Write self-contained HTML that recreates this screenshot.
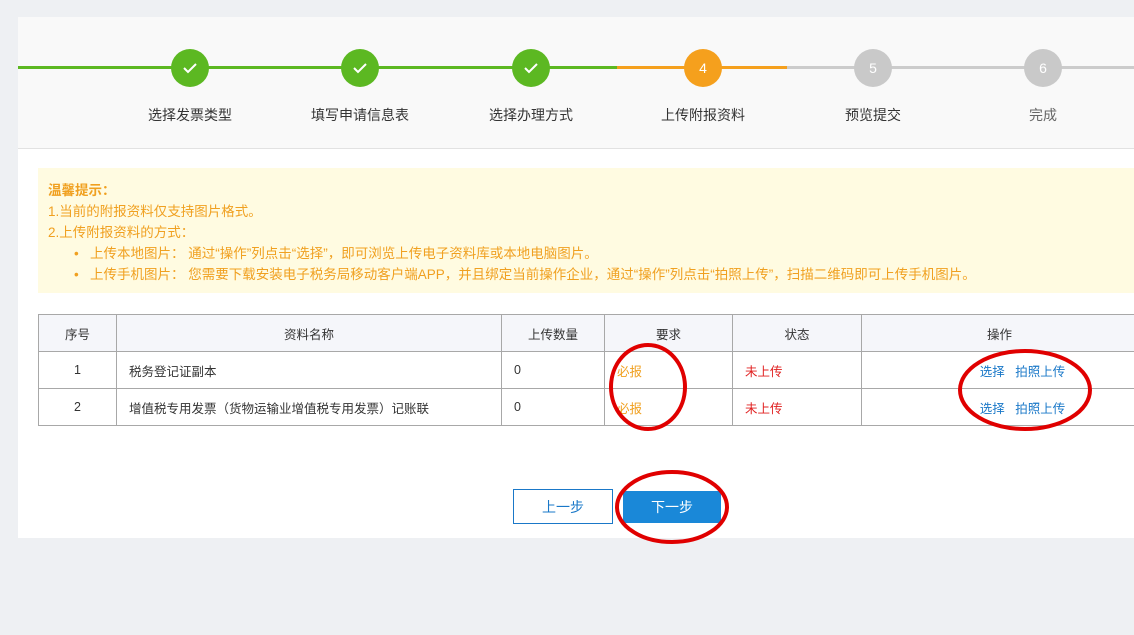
<!DOCTYPE html>
<html><head><meta charset="utf-8"><style>
*{margin:0;padding:0;box-sizing:border-box}
body{width:1134px;height:635px;background:#eef0f3;position:relative;overflow:hidden;font-family:"Liberation Sans","Noto Sans CJK SC","Microsoft YaHei",sans-serif;font-size:13px;color:#333}
.panel{position:absolute;left:18px;top:17px;width:1116px;height:521px;background:#fff}
.steps{position:absolute;left:0;top:0;width:1116px;height:132px;background:#f9f9f9;border-bottom:1px solid #e2e2e2}
.ln{position:absolute;top:49px;height:3px}
.c{position:absolute;top:32px;width:38px;height:38px;border-radius:50%;color:#fff;text-align:center;line-height:38px;font-size:14px}
.lb{position:absolute;top:88px;width:140px;text-align:center;font-size:14px;color:#333}
.notice{position:absolute;left:20px;top:151px;width:1096px;height:125px;background:#fffbe1;color:#f0a020;font-size:13.5px;padding:12px 0 0 10px;line-height:21px}
.notice b{font-weight:bold}
.notice .li{padding-left:26px;position:relative}
.notice .li:before{content:"•";position:absolute;left:26px;top:0}
.notice .li span{padding-left:16px}
table{position:absolute;left:20px;top:297px;border-collapse:collapse;width:1100px;font-size:12.5px}
td,th{border:1px solid #a8a8a8;height:37px;font-weight:normal}
th{background:#f5f6fa;text-align:center;color:#333}
td{padding-left:12px}
.o{color:#f0a020}.r{color:#e02020}.bl{color:#1a78c8}
.btn{position:absolute;height:35px;text-align:center;line-height:35px;font-size:14px}
</style></head><body>
<div class="panel">
<div class="steps">
<div class="ln" style="left:0;width:599px;background:#5cb822"></div>
<div class="ln" style="left:599px;width:170px;background:#f5a01d"></div>
<div class="ln" style="left:769px;width:347px;background:#ccc"></div>
<div class="c" style="left:153px;background:#5cb822"><svg width="16" height="12" viewBox="0 0 16 12" style="margin-top:13px"><path d="M2 6l4 4 8-8" stroke="#fff" stroke-width="2" fill="none"/></svg></div>
<div class="c" style="left:323px;background:#5cb822"><svg width="16" height="12" viewBox="0 0 16 12" style="margin-top:13px"><path d="M2 6l4 4 8-8" stroke="#fff" stroke-width="2" fill="none"/></svg></div>
<div class="c" style="left:494px;background:#5cb822"><svg width="16" height="12" viewBox="0 0 16 12" style="margin-top:13px"><path d="M2 6l4 4 8-8" stroke="#fff" stroke-width="2" fill="none"/></svg></div>
<div class="c" style="left:666px;background:#f5a01d">4</div>
<div class="c" style="left:836px;background:#c9c9c9">5</div>
<div class="c" style="left:1006px;background:#c9c9c9">6</div>
<div class="lb" style="left:102px">选择发票类型</div>
<div class="lb" style="left:272px">填写申请信息表</div>
<div class="lb" style="left:443px">选择办理方式</div>
<div class="lb" style="left:615px">上传附报资料</div>
<div class="lb" style="left:785px">预览提交</div>
<div class="lb" style="left:955px;color:#666">完成</div>
</div>
<div class="notice">
<div><b>温馨提示：</b></div>
<div>1.当前的附报资料仅支持图片格式。</div>
<div>2.上传附报资料的方式：</div>
<div class="li"><span>上传本地图片： 通过“操作”列点击“选择”，即可浏览上传电子资料库或本地电脑图片。</span></div>
<div class="li"><span>上传手机图片： 您需要下载安装电子税务局移动客户端APP，并且绑定当前操作企业，通过“操作”列点击“拍照上传”，扫描二维码即可上传手机图片。</span></div>
</div>
<table>
<tr><th style="width:78px">序号</th><th style="width:385px">资料名称</th><th style="width:103px">上传数量</th><th style="width:128px">要求</th><th style="width:129px">状态</th><th>操作</th></tr>
<tr><td style="text-align:center;padding:0">1</td><td>税务登记证副本</td><td>0</td><td class="o">必报</td><td class="r">未上传</td><td style="text-align:center;padding:0 0 0 46px" class="bl">选择&nbsp;&nbsp;&nbsp;拍照上传</td></tr>
<tr><td style="text-align:center;padding:0">2</td><td>增值税专用发票（货物运输业增值税专用发票）记账联</td><td>0</td><td class="o">必报</td><td class="r">未上传</td><td style="text-align:center;padding:0 0 0 46px" class="bl">选择&nbsp;&nbsp;&nbsp;拍照上传</td></tr>
</table>
<div class="btn" style="left:495px;top:472px;width:100px;border:1px solid #1a78c8;color:#1a78c8;background:#fff">上一步</div>
<div class="btn" style="left:605px;top:474px;width:98px;height:32px;line-height:32px;background:#1a88d8;color:#fff">下一步</div>
</div>
<svg width="1134" height="635" style="position:absolute;left:0;top:0" fill="none" stroke="#e00000" stroke-width="4">
<ellipse cx="648" cy="387" rx="37" ry="42"/>
<ellipse cx="1025" cy="390" rx="65" ry="39"/>
<ellipse cx="672" cy="507" rx="55" ry="35"/>
</svg>
</body></html>
